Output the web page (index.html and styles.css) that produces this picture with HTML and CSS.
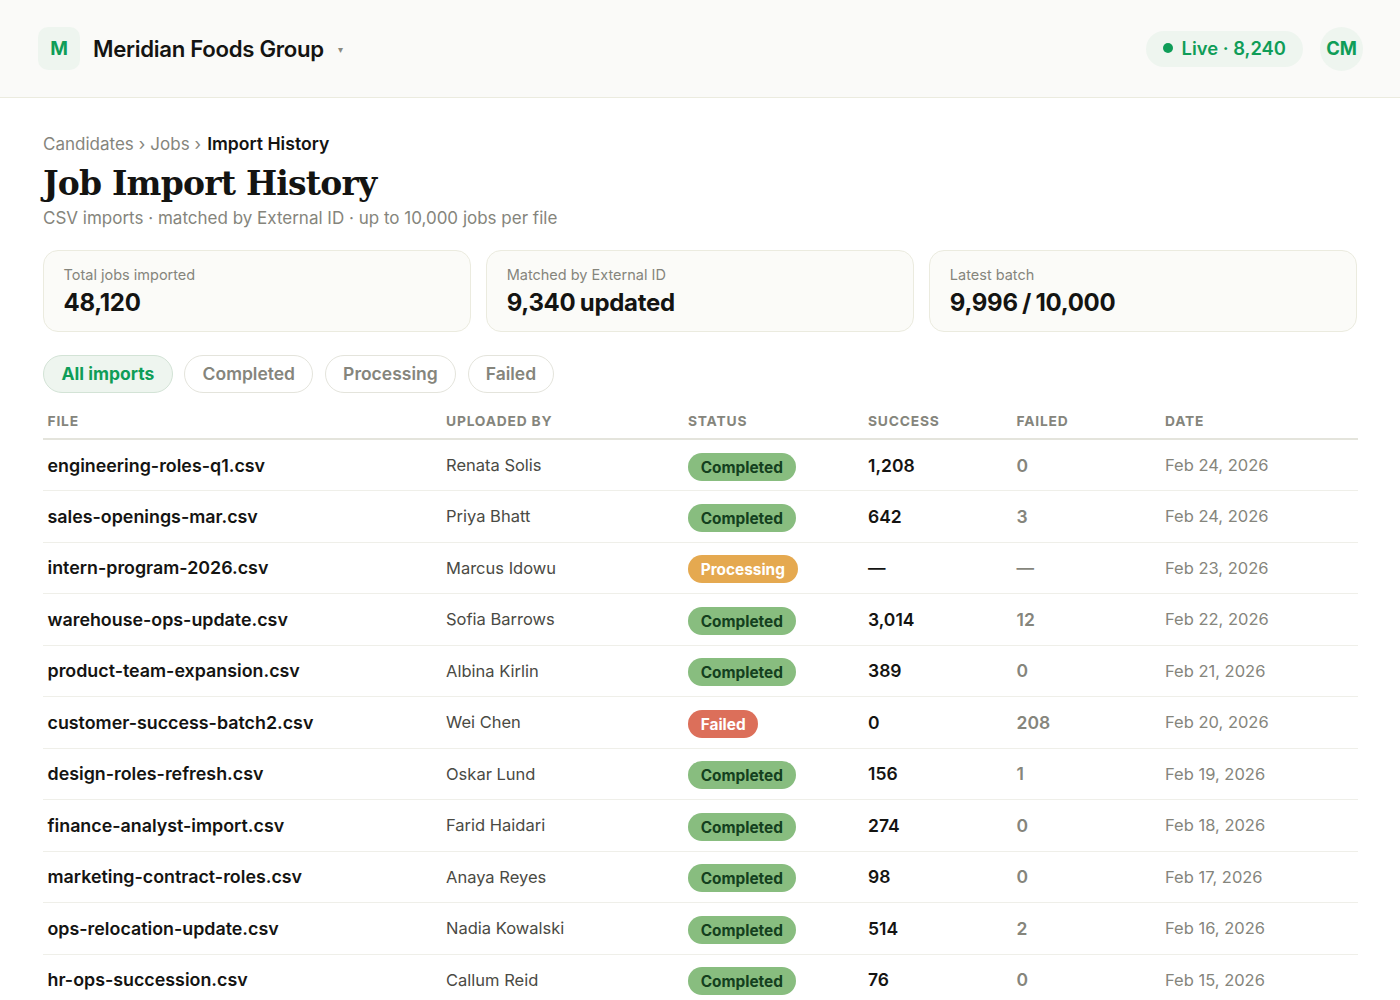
FILE: index.html
```html
<!DOCTYPE html>
<html lang="en">
<head>
<meta charset="utf-8">
<title>Job Import History</title>
<link rel="stylesheet" href="styles.css">
</head>
<body>
<header class="topbar">
  <div class="org">
    <div class="org-logo">M</div>
    <span class="org-name">Meridian Foods Group</span>
    <span class="org-caret">▾</span>
  </div>
  <div class="top-right">
    <div class="live"><span class="live-dot"></span>Live · 8,240</div>
    <div class="avatar">CM</div>
  </div>
</header>
<main class="main">
  <nav class="crumbs"><span>Candidates</span><span class="sep">›</span><span>Jobs</span><span class="sep">›</span><strong>Import History</strong></nav>
  <h1 class="title">Job Import History</h1>
  <p class="subtitle">CSV imports · matched by External ID · up to 10,000 jobs per file</p>
  <section class="stats">
    <div class="stat"><div class="stat-label">Total jobs imported</div><div class="stat-value">48,120</div></div>
    <div class="stat"><div class="stat-label">Matched by External ID</div><div class="stat-value">9,340 updated</div></div>
    <div class="stat"><div class="stat-label">Latest batch</div><div class="stat-value">9,996 / 10,000</div></div>
  </section>
  <div class="filters">
    <button class="chip chip-active">All imports</button>
    <button class="chip">Completed</button>
    <button class="chip">Processing</button>
    <button class="chip">Failed</button>
  </div>
  <table class="jobs">
    <colgroup><col class="c-file"><col class="c-user"><col class="c-status"><col class="c-success"><col class="c-failed"><col class="c-date"></colgroup>
    <thead><tr><th>File</th><th>Uploaded by</th><th>Status</th><th>Success</th><th>Failed</th><th>Date</th></tr></thead>
    <tbody>
      <tr><td class="file">engineering-roles-q1.csv</td><td class="user">Renata Solis</td><td><span class="badge done">Completed</span></td><td class="ok">1,208</td><td class="bad">0</td><td class="date">Feb 24, 2026</td></tr>
      <tr><td class="file">sales-openings-mar.csv</td><td class="user">Priya Bhatt</td><td><span class="badge done">Completed</span></td><td class="ok">642</td><td class="bad">3</td><td class="date">Feb 24, 2026</td></tr>
      <tr><td class="file">intern-program-2026.csv</td><td class="user">Marcus Idowu</td><td><span class="badge proc">Processing</span></td><td class="ok">—</td><td class="bad">—</td><td class="date">Feb 23, 2026</td></tr>
      <tr><td class="file">warehouse-ops-update.csv</td><td class="user">Sofia Barrows</td><td><span class="badge done">Completed</span></td><td class="ok">3,014</td><td class="bad">12</td><td class="date">Feb 22, 2026</td></tr>
      <tr><td class="file">product-team-expansion.csv</td><td class="user">Albina Kirlin</td><td><span class="badge done">Completed</span></td><td class="ok">389</td><td class="bad">0</td><td class="date">Feb 21, 2026</td></tr>
      <tr><td class="file">customer-success-batch2.csv</td><td class="user">Wei Chen</td><td><span class="badge fail">Failed</span></td><td class="ok">0</td><td class="bad">208</td><td class="date">Feb 20, 2026</td></tr>
      <tr><td class="file">design-roles-refresh.csv</td><td class="user">Oskar Lund</td><td><span class="badge done">Completed</span></td><td class="ok">156</td><td class="bad">1</td><td class="date">Feb 19, 2026</td></tr>
      <tr><td class="file">finance-analyst-import.csv</td><td class="user">Farid Haidari</td><td><span class="badge done">Completed</span></td><td class="ok">274</td><td class="bad">0</td><td class="date">Feb 18, 2026</td></tr>
      <tr><td class="file">marketing-contract-roles.csv</td><td class="user">Anaya Reyes</td><td><span class="badge done">Completed</span></td><td class="ok">98</td><td class="bad">0</td><td class="date">Feb 17, 2026</td></tr>
      <tr><td class="file">ops-relocation-update.csv</td><td class="user">Nadia Kowalski</td><td><span class="badge done">Completed</span></td><td class="ok">514</td><td class="bad">2</td><td class="date">Feb 16, 2026</td></tr>
      <tr><td class="file">hr-ops-succession.csv</td><td class="user">Callum Reid</td><td><span class="badge done">Completed</span></td><td class="ok">76</td><td class="bad">0</td><td class="date">Feb 15, 2026</td></tr>
    </tbody>
  </table>
</main>
</body>
</html>
```
FILE: styles.css
```css
* { box-sizing: border-box; }
html, body { margin: 0; height: 1000px; overflow: hidden; }
body { background: #fff; color: #141412; font-family: Inter, "Liberation Sans", sans-serif; }

.topbar { height: 98px; background: #fafaf8; border-bottom: 1px solid #ebebdf; display: flex; align-items: center; justify-content: space-between; padding: 0 37px 0 38px; }
.org { display: flex; align-items: center; }
.org-logo { width: 42px; height: 43px; border-radius: 10px; background: #eef5ef; color: #0f9d58; font-weight: 700; font-size: 19px; display: flex; align-items: center; justify-content: center; }
.org-name { margin-left: 13px; font-size: 22.2px; font-weight: 600; letter-spacing: -0.3px; }
.org-caret { margin-left: 14px; font-size: 10px; color: #8a8a80; }
.top-right { display: flex; align-items: center; gap: 17px; }
.live { height: 36px; padding: 0 17px 1px; border-radius: 18px; background: #eef5ef; color: #0f9d58; font-size: 18.4px; font-weight: 600; display: flex; align-items: center; }
.live-dot { width: 10px; height: 10px; border-radius: 50%; background: #0f9d58; margin-right: 9px; }
.avatar { width: 43px; height: 44px; padding-bottom: 1px; border-radius: 50%; background: #eef5ef; color: #0f9d58; font-size: 18.4px; font-weight: 700; display: flex; align-items: center; justify-content: center; }

.main { padding: 33px 42px 0 43px; }
.crumbs { display: flex; gap: 5px; font-size: 17px; line-height: 26px; color: #85857c; }
.crumbs strong { margin-left: 1px; font-weight: 600; font-size: 17.6px; color: #141412; }
.title { margin: 5px 0 -1px; font-family: "DejaVu Serif", serif; font-size: 33px; line-height: 44px; font-weight: 700; letter-spacing: -0.8px; color: #141412; }
.subtitle { margin: 0; font-size: 17px; line-height: 26px; color: #85857c; }

.stats { margin: 19px 0.5px 0 0; display: grid; grid-template-columns: repeat(3, 1fr); gap: 15px; }
.stat { height: 82px; padding: 14px 19.5px; background: #fbfbf8; border: 1px solid #ebebdf; border-radius: 15px; }
.stat-label { font-size: 14.5px; line-height: 20px; color: #85857c; }
.stat-value { margin-top: 1.5px; font-size: 24px; line-height: 32px; font-weight: 700; letter-spacing: -0.3px; word-spacing: -1px; color: #141412; }

.filters { margin-top: 23px; display: flex; gap: 11.7px; }
.chip { height: 38px; padding: 0 17.2px 2px; border: 1px solid #e4e4dc; border-radius: 19px; background: #fff; font-family: inherit; font-size: 17.5px; font-weight: 600; color: #85857c; }
.chip-active { padding: 0 17.5px 2px; background: #eef5ef; border-color: #d3e3d6; color: #0f9d58; font-weight: 700; }

.jobs { margin-top: 8px; width: 100%; border-collapse: collapse; table-layout: fixed; }
.c-file { width: 398.5px; } .c-user { width: 242px; } .c-status { width: 180px; } .c-success { width: 148.5px; } .c-failed { width: 148.5px; }
.jobs th { height: 38px; padding: 2px 4.5px 0; text-align: left; font-size: 13.8px; font-weight: 700; letter-spacing: 0.8px; text-transform: uppercase; color: #85857c; border-bottom: 2px solid #e4e4dc; }
.jobs td { height: 51.5px; padding: 0 4.5px; border-bottom: 1px solid #efefe9; font-size: 16.5px; }
.file { font-weight: 600; font-size: 17.85px !important; }
.user, .date { color: #4a4a44; }
.date { color: #85857c; }
.ok { font-weight: 600; font-size: 17.5px !important; }
.bad { color: #85857c; font-weight: 600; font-size: 17.5px !important; }
.badge { display: inline-block; height: 28px; line-height: 29px; padding: 0 12.7px; margin-top: 3px; border-radius: 14px; font-size: 15.4px; font-weight: 700; vertical-align: middle; }
.done { background: #88bd7f; color: #14401e; }
.proc { background: #e5a950; color: #fff; }
.fail { background: #dc6f5a; color: #fff; }
```
